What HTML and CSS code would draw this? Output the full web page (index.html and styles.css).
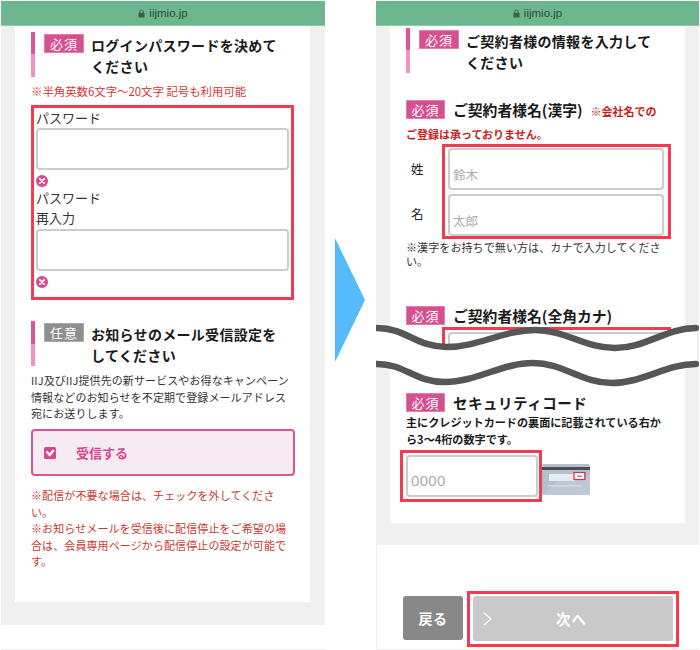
FILE: index.html
```html
<!DOCTYPE html>
<html lang="ja">
<head>
<meta charset="utf-8">
<title>iijmio</title>
<link rel="stylesheet" href="styles.css">
</head>
<body>
<div class="stage">
  <section class="phone first">
    <div class="urlbar"><svg class="lock" viewBox="0 0 8 10"><path d="M2 4.500V3a2 2 0 0 1 4 0v1.500" fill="none" stroke="#3f5f4d" stroke-width="1.100"/><rect x="0.500" y="4.200" width="7" height="5.500" rx="1" fill="#3f5f4d"/></svg><span>iijmio.jp</span></div>
    <div class="card card-a">
      <div class="head"><i class="bar"></i><b class="tag">必須</b><h2>ログインパスワードを決めてください</h2></div>
      <p class="pw-note">※半角英数6文字〜20文字 記号も利用可能</p>
      <div class="redbox pw-box">
        <label class="lbl">パスワード</label>
        <div class="input pw-input"></div>
        <svg class="err" viewBox="0 0 12 12"><circle cx="6" cy="6" r="6" fill="#d9488f"/><path d="M3.800 3.800l4.400 4.400M8.200 3.800l-4.400 4.400" stroke="#fff" stroke-width="1.800" stroke-linecap="round"/></svg>
        <label class="lbl lbl-2">パスワード<br>再入力</label>
        <div class="input pw-input"></div>
        <svg class="err" viewBox="0 0 12 12"><circle cx="6" cy="6" r="6" fill="#d9488f"/><path d="M3.800 3.800l4.400 4.400M8.200 3.800l-4.400 4.400" stroke="#fff" stroke-width="1.800" stroke-linecap="round"/></svg>
      </div>
      <div class="head head-opt"><i class="bar"></i><b class="tag gray">任意</b><h2>お知らせのメール受信設定をしてください</h2></div>
      <p class="body-text">IIJ及びIIJ提供先の新サービスやお得なキャンペーン情報などのお知らせを不定期で登録メールアドレス宛にお送りします。</p>
      <div class="check">
        <svg class="tick" viewBox="0 0 12 12"><rect width="12" height="12" rx="1.500" fill="#d9488f"/><path d="M2.500 4.500L5.800 8 9.800 3" fill="none" stroke="#fff" stroke-width="2.400"/></svg>
        <span>受信する</span>
      </div>
      <p class="red-notes">※配信が不要な場合は、チェックを外してください。<br>※お知らせメールを受信後に配信停止をご希望の場合は、会員専用ページから配信停止の設定が可能です。</p>
    </div>
    <div class="footer"></div>
  </section>

  <div class="arrow-col"><svg class="arrow" viewBox="0 0 30 124"><path d="M0 0L30 62L0 124Z" fill="#55bbfb"/></svg></div>

  <section class="phone second">
    <div class="urlbar"><svg class="lock" viewBox="0 0 8 10"><path d="M2 4.500V3a2 2 0 0 1 4 0v1.500" fill="none" stroke="#3f5f4d" stroke-width="1.100"/><rect x="0.500" y="4.200" width="7" height="5.500" rx="1" fill="#3f5f4d"/></svg><span>iijmio.jp</span></div>
    <div class="card card-b">
      <div class="head head-b"><i class="bar"></i><b class="tag">必須</b><h2>ご契約者様の情報を入力してください</h2></div>
      <div class="sub sub-1"><b class="tag">必須</b><h3>ご契約者様名(漢字)</h3><em>※会社名での</em></div>
      <p class="warn">ご登録は承っておりません。</p>
      <div class="name-row">
        <div class="name-labels"><span>姓</span><span>名</span></div>
        <div class="redbox name-box">
          <div class="input name-input">鈴木</div>
          <div class="input name-input">太郎</div>
        </div>
      </div>
      <p class="kanji-note">※漢字をお持ちで無い方は、カナで入力してください。</p>
      <div class="sub sub-2"><b class="tag">必須</b><h3>ご契約者様名(全角カナ)</h3></div>
      <div class="redbox kana-box"><div class="input kana-input"></div></div>
      <div class="sub sub-3"><b class="tag">必須</b><h3 class="big">セキュリティコード</h3></div>
      <p class="sec-note">主にクレジットカードの裏面に記載されている右から3〜4桁の数字です。</p>
      <div class="code-row">
        <div class="redbox code-box"><div class="input code-input">0000</div></div>
        <svg class="ccard" viewBox="0 0 48 31">
          <rect width="48" height="31" rx="2" fill="#b4bfcd"/>
          <path d="M0 31L22 12H48V29a2 2 0 0 1-2 2Z" fill="#bfc9d6"/>
          <rect y="3" width="48" height="3" fill="#4d4d4d"/>
          <rect x="7" y="10" width="26" height="7" fill="#e2edf3"/>
          <rect x="32" y="9" width="10" height="7" fill="#fff"/>
          <rect x="32" y="8.500" width="11" height="7" fill="none" stroke="#d5303c" stroke-width="1.200"/>
          <rect x="35" y="11.500" width="5" height="1.500" fill="#8a98a8"/>
          <rect x="6" y="21" width="33" height="1.500" fill="#d3dae3"/>
        </svg>
      </div>
    </div>
    <div class="footer footer-b">
      <button class="btn back">戻る</button>
      <div class="redbox next-box">
        <button class="btn next"><svg class="chev" viewBox="0 0 9 14"><path d="M1 1l7 6-7 6" fill="none" stroke="#fff" stroke-width="1.200"/></svg><span>次へ</span></button>
      </div>
    </div>
    <svg class="wave" viewBox="0 0 323 74">
      <path d="M0 8C30 8 40 27 71 27S128 10 159 10 208 28 239 28 290 8 321 8V44C290 44 267 63 236 63S188 43 157 43 100 62 69 62 30 44 0 44Z" fill="#fff"/>
      <path d="M1 8C30 8 40 27 71 27S128 10 159 10 208 28 239 28 290 8 320 8" fill="none" stroke="#565656" stroke-width="6.500" stroke-linecap="round"/>
      <path d="M1 44C30 44 38 62 69 62S126 43 157 43 205 63 236 63 290 44 320 44" fill="none" stroke="#565656" stroke-width="6.500" stroke-linecap="round"/>
    </svg>
  </section>
</div>
</body>
</html>
```
FILE: styles.css
```css
* { box-sizing: border-box; }
html, body { margin: 0; padding: 0; background: #fff; }
body {
  font-family: "Noto Sans CJK JP", "Noto Sans", sans-serif;
  color: #222;
  width: 700px;
  height: 650px;
  overflow: hidden;
}
.stage { display: flex; height: 650px; padding: 1px 0 0 1px; }
p, h2, h3 { margin: 0; }
.phone {
  position: relative;
  width: 324px;
  height: 649px;
  background: #f0f0f0;
  display: flex;
  flex-direction: column;
}
.second { width: 323px; }
.arrow-col { width: 51px; flex: none; }
.arrow { display: block; width: 30px; height: 124px; margin: 237px 0 0 10px; }
.urlbar {
  height: 25px;
  flex: none;
  background: #6cb78d;
  border-bottom: 1px solid #8fc8a6;
  display: flex;
  align-items: center;
  justify-content: center;
  gap: 4px;
  font-size: 11.500px;
  color: #2f4a3a;
  font-family: "Liberation Sans", sans-serif;
}
.lock { width: 7px; height: 9px; }
.card {
  flex: none;
  width: 295px;
  margin-left: 14px;
  background: #fff;
  padding-left: 16px;
}
.card-a { height: 576px; padding-top: 6px; }
.card-b { height: 497px; padding-top: 2px; }
.head { display: flex; align-items: flex-start; height: 45px; }
.bar {
  width: 4px;
  height: 45px;
  flex: none;
  background: linear-gradient(#d9559a 0 50%, #ea93c4 50%);
}
.tag {
  flex: none;
  width: 40px;
  height: 19px;
  margin: 2px 7px 0 9px;
  background: #d5508f;
  border: 1px solid #e07fb0;
  color: #fff;
  font-weight: 400;
  font-size: 13px;
  line-height: 17px;
  text-align: center;
  letter-spacing: 1px;
}
.tag.gray { background: #8e8e8e; border-color: #aaa; }
h2 {
  width: 195px;
  font-size: 14px;
  line-height: 21px;
  font-weight: 700;
  letter-spacing: 0.300px;
  color: #1a1a1a;
  margin-top: 3px;
}
.pw-note { font-size: 11.400px; line-height: 16px; color: #cf3a37; margin-top: 6px; }
.redbox { border: 3px solid #f33a4e; }
.pw-box {
  width: 263px;
  height: 195px;
  margin-top: 6px;
  padding: 0 2px;
}
.lbl { display: block; font-size: 13px; line-height: 20px; font-weight: 400; color: #333; }
.lbl-2 { margin-bottom: 1px; }
.input {
  background: #fff;
  border: 2px solid #ccc;
  border-radius: 4px;
}
.pw-input { width: 253px; height: 42px; }
.err { display: block; width: 12px; height: 12px; margin: 5px 0 1px; }
.head-opt { margin-top: 21px; }
.body-text { width: 258px; font-size: 11px; line-height: 16.700px; letter-spacing: 0.100px; color: #333; margin-top: 6px; }
.check {
  width: 264px;
  height: 47px;
  margin-top: 7px;
  background: #f6ebf1;
  border: 2px solid #d9559a;
  border-radius: 4px;
  display: flex;
  align-items: center;
  color: #d9488f;
  font-weight: 700;
  font-size: 13px;
}
.tick { width: 12px; height: 12px; margin: 0 20px 0 11px; }
.red-notes { width: 258px; font-size: 11px; line-height: 16.500px; letter-spacing: 0.100px; color: #c9392f; margin-top: 11px; }
.footer {
  flex: 1;
  margin-top: 23px;
  background: #fff;
  border-bottom: 1px solid #eee;
}
.head-b { margin-left: 0; }
.sub { display: flex; align-items: flex-start; height: 20px; }
.sub .tag { margin: 0 8px 0 0; width: 39px; }
h3 { font-size: 14.800px; line-height: 20px; font-weight: 700; color: #1a1a1a; letter-spacing: 0; }
h3.big { font-size: 14.500px; letter-spacing: 0.500px; }
em { font-style: normal; font-size: 11px; font-weight: 700; line-height: 22px; color: #c81e1e; margin-left: 8px; }
.sub-1 { margin-top: 27px; }
.warn { font-size: 11px; font-weight: 700; line-height: 16px; color: #c81e1e; margin-top: 6px; }
.name-row { display: flex; margin-top: 2px; }
.name-labels {
  width: 36px;
  display: flex;
  flex-direction: column;
  padding: 15px 0 0 5px;
  gap: 25px;
  font-size: 12.500px;
  line-height: 20px;
}
.name-box { width: 229px; height: 95px; padding: 1px 3px; }
.name-input {
  width: 216px;
  height: 42px;
  margin-bottom: 4px;
  padding: 15px 3px 0;
  font-size: 12.500px;
  line-height: 20px;
  color: #aaa;
}
.kanji-note { width: 262px; font-size: 11px; line-height: 14px; letter-spacing: 0.100px; color: #333; margin-top: 1px; }
.sub-2 { margin-top: 38px; }
.kana-box { width: 229px; height: 30px; margin: 1px 0 36px 36px; border-bottom: 0; padding: 2px 3px 0; overflow: hidden; }
.kana-input { width: 216px; height: 42px; }
.sec-note { width: 260px; font-size: 11.100px; font-weight: 700; line-height: 17px; color: #1a1a1a; margin-top: 1px; }
.code-row { display: flex; align-items: flex-start; margin: 2px 0 0 -6px; }
.code-box { width: 142px; height: 52px; padding: 2px 3px; }
.code-input {
  width: 132px;
  height: 42px;
  padding: 12px 3px 0;
  font-size: 15px;
  line-height: 24px;
  color: #aaa;
  font-family: "Liberation Sans", sans-serif;
  letter-spacing: 0.300px;
}
.ccard { width: 48px; height: 31px; margin-top: 14px; flex: none; }
.footer-b {
  margin-top: 22px;
  display: flex;
  align-items: flex-start;
  padding: 46px 0 0 26px;
  border-left: 1px solid #f0f0f0;
}
.btn {
  border: 0;
  border-radius: 3px;
  font-family: inherit;
  font-weight: 700;
  color: #fff;
  padding: 0;
  height: 44px;
}
.back { width: 60px; background: #888; font-size: 14px; margin-top: 5px; letter-spacing: 0.500px; }
.next-box { width: 212px; height: 56px; margin-left: 4px; padding: 2px 3px; }
.next {
  width: 200px;
  height: 45px;
  background: #c9c9c9;
  position: relative;
  font-size: 14.500px;
  letter-spacing: 1px;
  display: flex;
  align-items: center;
  padding-left: 10px;
}
.chev { width: 9px; height: 14px; }
.next span { margin-left: 64px; }
.wave { position: absolute; left: 0; top: 319px; width: 323px; height: 74px; }
```
